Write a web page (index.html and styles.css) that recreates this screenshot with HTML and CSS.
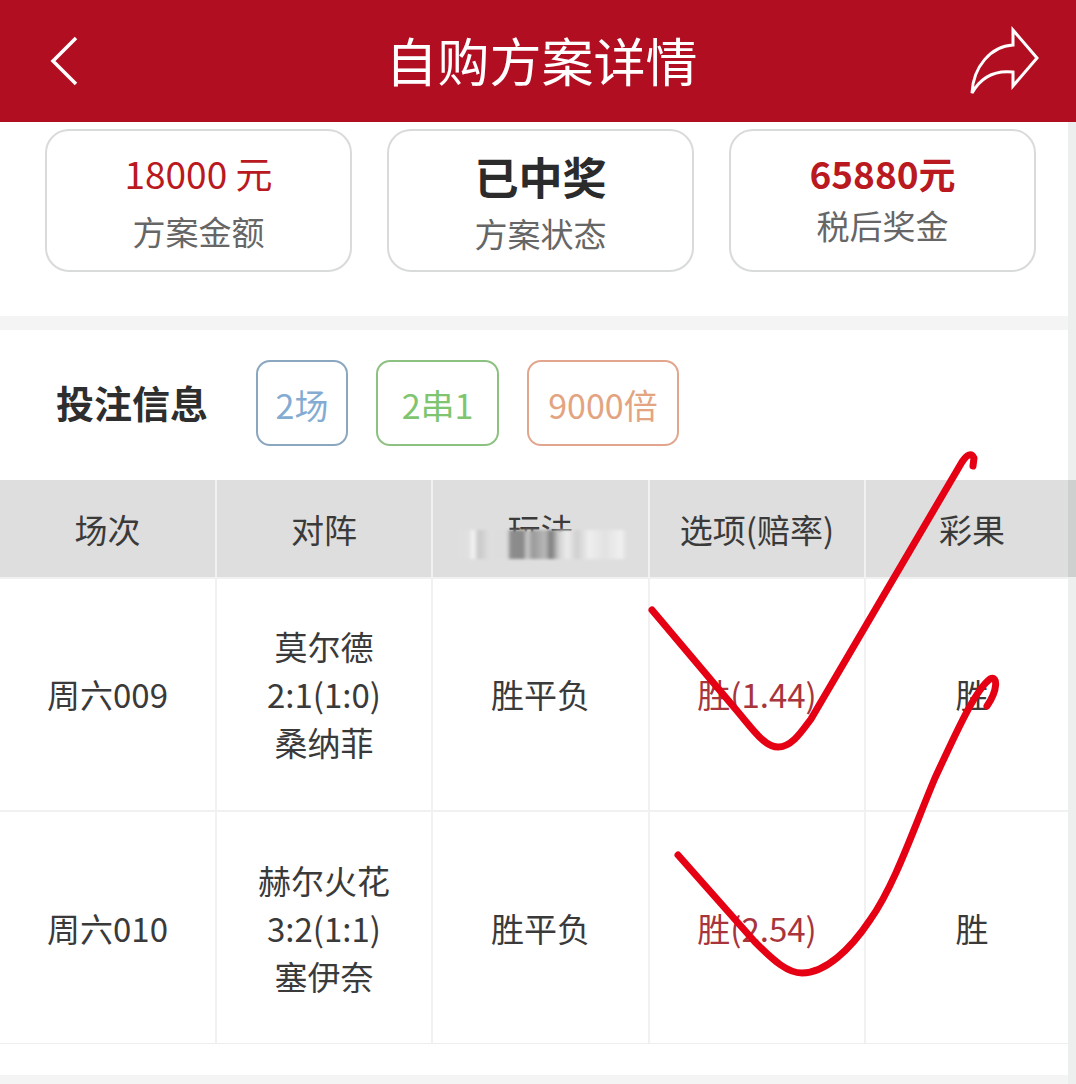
FILE: index.html
```html
<!DOCTYPE html>
<html lang="zh-CN">
<head>
  <meta charset="UTF-8">
  <title>自购方案详情</title>
  <link rel="stylesheet" href="styles.css">
</head>
<body>
  <div class="page">
    <header class="topbar">
      <svg class="icon-back" width="40" height="60" viewBox="0 0 40 60">
        <path d="M33 7 L10 30 L33 53" fill="none" stroke="#fff" stroke-width="3.5"/>
      </svg>
      <h1 class="title">自购方案详情</h1>
      <svg class="icon-share" width="72" height="72" viewBox="0 0 72 72">
        <path d="M45 5 L69 33 L45 61 V47 C27 45 13 52 4 68 C5 42 23 21 45 20 Z" fill="none" stroke="#fff" stroke-width="3" stroke-linejoin="miter"/>
      </svg>
    </header>

    <div class="content">
      <main class="main">
        <section class="summary">
          <div class="card">
            <div class="card-value red">18000 元</div>
            <div class="card-label">方案金额</div>
          </div>
          <div class="card card-status">
            <div class="card-value strong">已中奖</div>
            <div class="card-label">方案状态</div>
          </div>
          <div class="card card-prize">
            <div class="card-value red bold">65880元</div>
            <div class="card-label">税后奖金</div>
          </div>
        </section>

        <div class="band"></div>

        <section class="info">
          <h2 class="info-title">投注信息</h2>
          <span class="tag tag-blue">2场</span>
          <span class="tag tag-green">2串1</span>
          <span class="tag tag-orange">9000倍</span>
        </section>

        <section class="grid">
          <div class="cell head">场次</div>
          <div class="cell head">对阵</div>
          <div class="cell head smudged">玩法<span class="smudge"></span></div>
          <div class="cell head">选项(赔率)</div>
          <div class="cell head">彩果</div>

          <div class="cell">周六009</div>
          <div class="cell">莫尔德<br>2:1(1:0)<br>桑纳菲</div>
          <div class="cell">胜平负</div>
          <div class="cell odds">胜(1.44)</div>
          <div class="cell">胜</div>

          <div class="cell row-last">周六010</div>
          <div class="cell row-last">赫尔火花<br>3:2(1:1)<br>塞伊奈</div>
          <div class="cell row-last">胜平负</div>
          <div class="cell row-last odds">胜(2.54)</div>
          <div class="cell row-last">胜</div>
        </section>

        <div class="foot"></div>
        <div class="band"></div>
      </main>
      <div class="scrollbar"></div>
    </div>

    <!-- hand drawn ticks on top of the screenshot -->
    <svg class="ticks" width="1076" height="1084" viewBox="0 0 1076 1084">
      <path d="M652 610 L738 712 C754 731 765 747 778 747 C792 747 802 731 811 719 L962 462 Q970 450 974 458 L973 466"/>
      <path d="M678 855 L755 942 C775 962 788 973 802 973 C825 973 850 950 870 920 C895 885 915 825 935 778 C955 735 975 690 990 679 C998 675 998 690 987 706"/>
    </svg>
  </div>
</body>
</html>
```

FILE: styles.css
```css
* { box-sizing: border-box; }
body {
  margin: 0;
  font-family: "Noto Sans CJK SC", "Noto Sans", sans-serif;
  background: #fff;
  color: #333;
}
.page {
  position: relative;
  width: 1076px;
  height: 1084px;
  overflow: hidden;
}

/* top bar */
.topbar {
  height: 122px;
  background: #b20e22;
  display: grid;
  grid-template-columns: 1fr auto 1fr;
  align-items: center;
  padding: 0 36px 0 43px;
}
.title {
  margin: -2px 0 0;
  font-size: 52px;
  font-weight: 400;
  line-height: 1;
  color: #fff;
}
.icon-share { justify-self: end; }

.content { display: flex; }
.main { width: 1068px; }
.scrollbar {
  position: relative;
  width: 8px;
  background: rgba(30, 50, 50, 0.08);
}

/* summary cards */
.summary {
  display: grid;
  grid-template-columns: repeat(3, 307px);
  gap: 35px;
  padding: 7px 0 44px 45px;
}
.card {
  height: 143px;
  border: 2px solid #d9dbdb;
  border-radius: 24px;
  text-align: center;
  padding-top: 17px;
}
.card-value { font-size: 37px; line-height: 50px; height: 50px; }
.card-label { font-size: 33px; line-height: 50px; color: #666; margin-top: 8px; }
.card-status { padding-top: 20px; }
.card-status .card-label { margin-top: 7px; }
.card-prize .card-label { margin-top: 2px; }
.red { color: #b9191f; }
.bold { font-weight: 700; }
.strong { font-size: 44px; font-weight: 700; color: #2b2b2b; }

.band { height: 14px; background: #f4f4f4; }

/* bet info */
.info {
  display: flex;
  align-items: center;
  gap: 28px;
  padding: 30px 0 34px 56px;
}
.info-title {
  width: 152px;
  margin: -4px 20px 0 0;
  font-size: 38px;
  font-weight: 700;
  white-space: nowrap;
  color: #2e2e2e;
}
.tag {
  height: 86px;
  border: 2px solid;
  border-radius: 14px;
  font-size: 34px;
  padding-top: 2px;
  display: flex;
  align-items: center;
  justify-content: center;
}
.tag-blue { width: 92px; color: #84abd2; border-color: #8ba7c0; }
.tag-green { width: 123px; color: #7fc56f; border-color: #8dc182; }
.tag-orange { width: 152px; color: #e3a481; border-color: #e2a68e; }

/* match table */
.grid {
  display: grid;
  grid-template-columns: 215px 214px 215px 214px 212px;
  grid-template-rows: 97px 231px 231px;
  gap: 2px;
  background: #f1f1f1;
  border-bottom: 1px solid #eee;
}
.cell {
  display: flex;
  align-items: center;
  justify-content: center;
  text-align: center;
  background: #fff;
  font-size: 33px;
  line-height: 48px;
  color: #3a3a3a;
  padding-bottom: 2px;
}
.head { background: #dedede; padding-bottom: 0; }
.row-last { padding-bottom: 0; }
.odds { color: #a8343c; }
.smudged { position: relative; }
.smudge {
  position: absolute;
  left: 22px;
  top: 50px;
  width: 172px;
  height: 29px;
  filter: blur(1.5px);
  background: linear-gradient(90deg,
    #dedede 0, #e0e0e0 14px, #f6f6f6 18px, #c8c8c8 24px, #dedede 34px,
    #dcdcdc 52px, #8d8d8d 56px, #8a8a8a 68px, #c9c9c9 72px, #9a9a9a 78px,
    #b8b8b8 90px, #7c7c7c 96px, #d0d0d0 104px, #ececec 112px, #cfcfcf 122px,
    #eeeeee 134px, #e2e2e2 150px, #f0f0f0 166px, #dedede 172px);
}
.foot { height: 31px; }

/* ticks */
.ticks {
  position: absolute;
  left: 0;
  top: 0;
  pointer-events: none;
}
.ticks path {
  fill: none;
  stroke: #e60014;
  stroke-width: 7;
  stroke-linecap: round;
  stroke-linejoin: round;
}
```
